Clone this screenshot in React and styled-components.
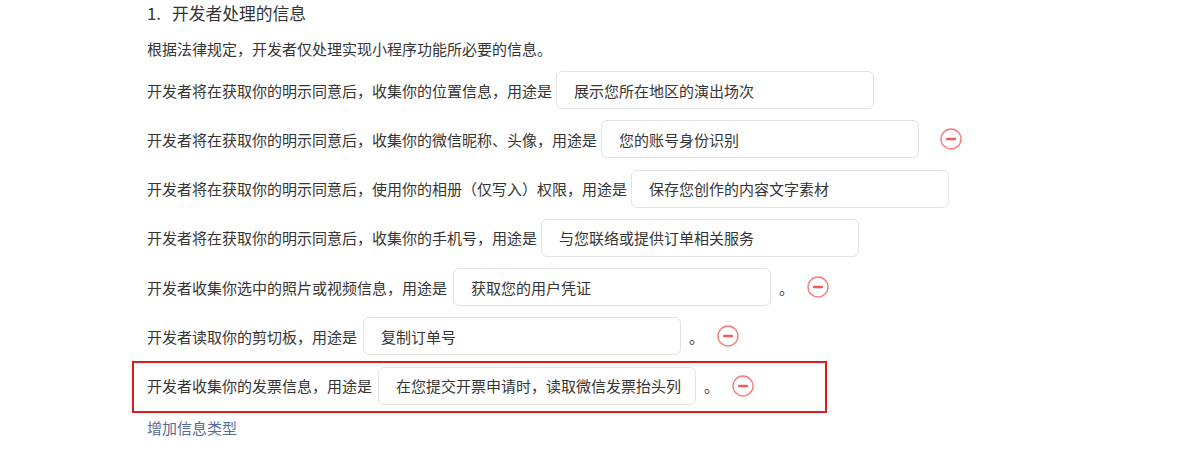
import React from 'react';
import styled, { createGlobalStyle } from 'styled-components';

const GlobalStyle = createGlobalStyle`
  body {
    margin: 0;
    background: #ffffff;
    font-family: "Noto Sans CJK SC", "Noto Sans", sans-serif;
    color: #353535;
  }
`;

const Page = styled.div`
  padding: 1px 0 0 147px;
`;

const Heading = styled.div`
  font-size: 16.75px;
  line-height: 24px;
  color: #333;
  display: flex;
  align-items: center;

  span {
    margin-right: 11px;
  }
`;

const Intro = styled.div`
  margin-top: 14px;
  font-size: 15px;
  line-height: 20px;
  color: #353535;
`;

const List = styled.div`
  margin-top: 12px;
  display: flex;
  flex-direction: column;
  gap: 11.3px;
`;

const Row = styled.div`
  position: relative;
  display: flex;
  align-items: center;
  height: 38px;
  font-size: 15px;

  ${(p) => p.$highlight && `
    &::after {
      content: '';
      position: absolute;
      top: -6px;
      bottom: -8px;
      left: -15px;
      width: 695px;
      border: 2px solid #e5161c;
      box-sizing: border-box;
      pointer-events: none;
    }
  `}
`;

const Label = styled.span`
  white-space: nowrap;
  margin-right: ${(p) => (p.$short ? '6px' : '4px')};
`;

const Field = styled.div`
  box-sizing: border-box;
  width: 318px;
  height: 38px;
  border: 1px solid #e3e3e3;
  border-radius: 6px;
  padding: 0 17px;
  display: flex;
  align-items: center;
  font-size: 15px;
  color: #353535;
  white-space: nowrap;
  overflow: hidden;
`;

const Period = styled.span`
  margin-left: 8px;
  width: 15px;
`;

const RemoveButton = styled.button`
  margin-left: ${(p) => (p.$afterPeriod ? '13px' : '21px')};
  width: 22px;
  height: 22px;
  padding: 0;
  border: none;
  background: none;
  cursor: pointer;
  display: flex;
`;

const AddLink = styled.a`
  display: inline-block;
  margin-top: 12px;
  font-size: 15px;
  color: #576b95;
  text-decoration: none;
  cursor: pointer;
`;

function MinusIcon() {
  return (
    <svg width="22" height="22" viewBox="0 0 22 22">
      <circle cx="11" cy="11" r="10" fill="none" stroke="#f77b7b" strokeWidth="1.4" />
      <rect x="6" y="9.8" width="10" height="2.4" rx="1" fill="#f25a5a" />
    </svg>
  );
}

const items = [
  { label: '开发者将在获取你的明示同意后，收集你的位置信息，用途是', value: '展示您所在地区的演出场次' },
  { label: '开发者将在获取你的明示同意后，收集你的微信昵称、头像，用途是', value: '您的账号身份识别', remove: true },
  { label: '开发者将在获取你的明示同意后，使用你的相册（仅写入）权限，用途是', value: '保存您创作的内容文字素材' },
  { label: '开发者将在获取你的明示同意后，收集你的手机号，用途是', value: '与您联络或提供订单相关服务' },
  { label: '开发者收集你选中的照片或视频信息，用途是', value: '获取您的用户凭证', period: true, remove: true },
  { label: '开发者读取你的剪切板，用途是', value: '复制订单号', period: true, remove: true },
  { label: '开发者收集你的发票信息，用途是', value: '在您提交开票申请时，读取微信发票抬头列', period: true, remove: true, highlight: true },
];

export default function App() {
  return (
    <Page>
      <GlobalStyle />
      <Heading>
        <span>1.</span>开发者处理的信息
      </Heading>
      <Intro>根据法律规定，开发者仅处理实现小程序功能所必要的信息。</Intro>
      <List>
        {items.map((item) => (
          <Row key={item.label} $highlight={item.highlight}>
            <Label $short={item.period}>{item.label}</Label>
            <Field>{item.value}</Field>
            {item.period && <Period>。</Period>}
            {item.remove && (
              <RemoveButton $afterPeriod={item.period}>
                <MinusIcon />
              </RemoveButton>
            )}
          </Row>
        ))}
      </List>
      <AddLink>增加信息类型</AddLink>
    </Page>
  );
}
